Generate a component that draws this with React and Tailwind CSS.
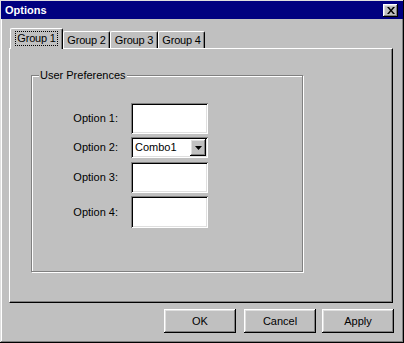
import React from "react";

// ----------------- Win95 bits -----------------
const raised =
  "shadow-[inset_-1px_-1px_#000,inset_1px_1px_#fff,inset_-2px_-2px_#808080,inset_2px_2px_#dfdfdf]";
const sunken =
  "shadow-[inset_1px_1px_#808080,inset_-1px_-1px_#fff,inset_2px_2px_#000,inset_-2px_-2px_#dfdfdf]";

const Tab = ({ label, active, className = "" }) =>
  active ? (
    <div
      className={`relative z-10 -mb-px h-[21px] shrink-0 flex items-start justify-center pt-[3px] bg-[#c0c0c0] border-t border-l border-white border-r border-r-black rounded-tl-[2px] rounded-tr-[2px] shadow-[inset_-1px_0_#808080] ${className}`}
    >
      <span className="px-[1px] whitespace-nowrap leading-[13px] tracking-[-0.2px] outline-1 outline-dotted outline-black">
        {label}
      </span>
    </div>
  ) : (
    <div
      className={`h-[17px] shrink-0 flex items-start justify-center pt-[2px] bg-[#c0c0c0] border-t border-l border-white border-r border-r-black rounded-tl-[2px] rounded-tr-[2px] shadow-[inset_-1px_0_#808080] ${className}`}
    >
      <span className="whitespace-nowrap leading-[13px] tracking-[-0.2px]">{label}</span>
    </div>
  );

const TextBox = ({ className = "" }) => (
  <div className={`w-[77px] bg-white ${sunken} ${className}`} />
);

const Combo = () => (
  <div className={`w-[77px] h-[21px] bg-white flex items-center p-[2px] ${sunken}`}>
    <span className="flex-1 pl-[2px] leading-[13px]">Combo1</span>
    <div className={`w-[16px] h-[17px] bg-[#c0c0c0] flex items-center justify-center ${raised}`}>
      <svg width="7" height="4" viewBox="0 0 7 4">
        <path d="M0 0h7L3.5 4z" fill="#000" />
      </svg>
    </div>
  </div>
);

const Button = ({ children, className = "" }) => (
  <button
    className={`w-[72px] h-[24px] bg-[#c0c0c0] flex items-center justify-center leading-[13px] ${raised} ${className}`}
  >
    {children}
  </button>
);

// ----------------- Dialog -----------------
export default function App() {
  return (
    <div
      className="w-[404px] h-[343px] bg-[#c0c0c0] p-[1px] flex flex-col text-[11px] text-black shadow-[inset_-1px_-1px_#000,inset_1px_1px_#dfdfdf,inset_-2px_-2px_#808080,inset_2px_2px_#fff]"
      style={{ fontFamily: '"Liberation Sans", Arial, sans-serif' }}
    >
      {/* Title bar */}
      <div className="h-[18px] bg-[#000080] flex items-center justify-between pl-[4px] pr-[5px]">
        <span className="text-white font-bold text-[11px] leading-[13px]">Options</span>
        <button className={`w-[15px] h-[13px] bg-[#c0c0c0] flex items-center justify-center ${raised}`}>
          <svg width="8" height="7" viewBox="0 0 8 7">
            <path d="M0 0h2l2 2.5L6 0h2L5 3.5 8 7H6L4 4.5 2 7H0l3-3.5z" fill="#000" />
          </svg>
        </button>
      </div>

      <div className="flex flex-col pl-[8px] pt-[9px]">
        {/* Tabs */}
        <div className="flex items-end h-[20px] ml-[1px]">
          <Tab label="Group 1" active className="w-[53px]" />
          <Tab label="Group 2" className="w-[47px]" />
          <Tab label="Group 3" className="w-[48px]" />
          <Tab label="Group 4" className="w-[47px]" />
        </div>

        {/* Tab panel */}
        <div className="w-[384px] h-[255px] border-t border-l border-white border-r border-b border-r-black border-b-black shadow-[inset_-1px_-1px_#808080] pl-[21px] pt-[20px]">
          <fieldset className="w-[272px] h-[203px] border border-[#808080] shadow-[inset_1px_1px_#fff,1px_1px_#fff]">
            <legend className="ml-[7px] px-[1px] bg-[#c0c0c0] leading-[13px]">User Preferences</legend>
            <div className="grid grid-cols-[55px_77px] gap-x-[13px] mt-[21px] pl-[31px] items-center">
              <span className="text-right whitespace-nowrap">Option 1:</span>
              <TextBox className="h-[31px]" />
              <span className="text-right whitespace-nowrap mt-[3px]">Option 2:</span>
              <div className="mt-[3px]"><Combo /></div>
              <span className="text-right whitespace-nowrap mt-[4px]">Option 3:</span>
              <TextBox className="h-[31px] mt-[4px]" />
              <span className="text-right whitespace-nowrap mt-[3px]">Option 4:</span>
              <TextBox className="h-[32px] mt-[3px]" />
            </div>
          </fieldset>
        </div>

        {/* Buttons */}
        <div className="flex mt-[6px] ml-[155px]">
          <Button>OK</Button>
          <Button className="ml-[8px]">Cancel</Button>
          <Button className="ml-[6px]">Apply</Button>
        </div>
      </div>
    </div>
  );
}
